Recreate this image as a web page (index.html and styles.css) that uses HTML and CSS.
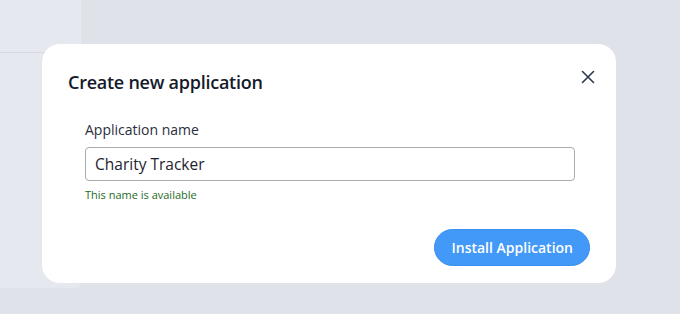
FILE: index.html
```html
<!DOCTYPE html>
<html lang="en">
  <head>
    <meta charset="UTF-8" />
    <meta name="viewport" content="width=device-width, initial-scale=1.0" />
    <title>Create new application</title>
    <link rel="stylesheet" href="styles.css">
  </head>
  <body>
    <div class="page">
      <div class="sidebar">
        <div class="sidebar-head"></div>
      </div>
    </div>

    <div class="modal">
      <div class="modal-header">
        <h2>Create new application</h2>
        <button class="close" aria-label="Close">
          <svg width="14" height="14" viewBox="0 0 14 14">
            <path d="M1.5 1.5 L12.5 12.5 M12.5 1.5 L1.5 12.5" stroke="#2b3752" stroke-width="1.6" stroke-linecap="round" />
          </svg>
        </button>
      </div>
      <div class="field">
        <label for="appName">Application name</label>
        <input type="text" id="appName" value="Charity Tracker" />
        <div class="hint">This name is available</div>
      </div>
      <div class="actions">
        <button class="install">Install Application</button>
      </div>
    </div>
  </body>
</html>
```

FILE: styles.css
```css
body {
  font-family: "Open Sans", "Noto Sans", sans-serif;
  margin: 0;
  background-color: #dfe2e9;
  width: 680px;
  height: 314px;
  overflow: hidden;
}
.page {
  display: flex;
}
.sidebar {
  width: 80px;
  height: 288px;
  background-color: #e5e8ee;
  border-right: 1px solid #e9ebf0;
  border-bottom-right-radius: 6px;
}
.sidebar-head {
  height: 52px;
  border-bottom: 1px solid #d6d9e0;
}
.modal {
  position: absolute;
  left: 42px;
  top: 44px;
  width: 574px;
  height: 239px;
  box-sizing: border-box;
  background-color: white;
  border-radius: 18px;
  padding: 24px 26px 0 26px;
}
.modal-header {
  display: flex;
  justify-content: space-between;
  align-items: flex-start;
}
.modal-header h2 {
  margin: 0;
  font-size: 18px;
  font-weight: 600;
  letter-spacing: -0.25px;
  color: #141a2b;
  line-height: 28px;
}
.close {
  border: none;
  background: none;
  padding: 0;
  margin-top: 2px;
  margin-right: -5px;
  cursor: pointer;
}
.field {
  margin: 24px 15px 0 17px;
}
.field label {
  display: block;
  font-size: 14px;
  color: #2a2f3d;
  margin-bottom: 8px;
}
.field input {
  width: 100%;
  height: 34px;
  box-sizing: border-box;
  padding: 0 9px;
  font-family: inherit;
  font-size: 15.5px;
  color: #1e2230;
  border: 1px solid #a9abb0;
  border-radius: 4px;
}
.hint {
  margin-top: 6px;
  font-size: 11px;
  color: #1c6b1c;
}
.actions {
  display: flex;
  justify-content: flex-end;
  margin-top: 27px;
}
.install {
  height: 37px;
  padding: 0 16px;
  font-family: inherit;
  font-size: 14px;
  font-weight: 600;
  color: white;
  background-color: #4299f8;
  border: 1px solid #3b8ff0;
  border-radius: 19px;
  cursor: pointer;
}
```
